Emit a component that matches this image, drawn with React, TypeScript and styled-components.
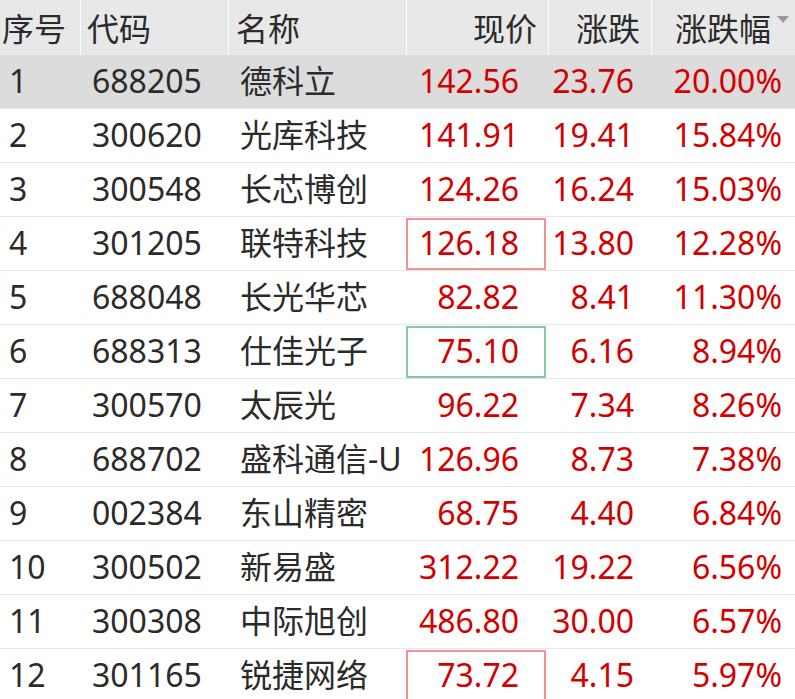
import styled, { createGlobalStyle } from "styled-components";

const GlobalStyle = createGlobalStyle`
	html, body {
		margin: 0;
		padding: 0;
		background: #ffffff;
		overflow: hidden;
	}
	body {
		font-family: "Noto Sans", "Noto Sans CJK SC", sans-serif;
	}
`;

type Mark = "up" | "down" | undefined;

interface Stock {
	code: string;
	name: string;
	price: string;
	change: string;
	pct: string;
	mark?: Mark;
}

const stocks: Stock[] = [
	{ code: "688205", name: "德科立", price: "142.56", change: "23.76", pct: "20.00%" },
	{ code: "300620", name: "光库科技", price: "141.91", change: "19.41", pct: "15.84%" },
	{ code: "300548", name: "长芯博创", price: "124.26", change: "16.24", pct: "15.03%" },
	{ code: "301205", name: "联特科技", price: "126.18", change: "13.80", pct: "12.28%", mark: "up" },
	{ code: "688048", name: "长光华芯", price: "82.82", change: "8.41", pct: "11.30%" },
	{ code: "688313", name: "仕佳光子", price: "75.10", change: "6.16", pct: "8.94%", mark: "down" },
	{ code: "300570", name: "太辰光", price: "96.22", change: "7.34", pct: "8.26%" },
	{ code: "688702", name: "盛科通信-U", price: "126.96", change: "8.73", pct: "7.38%" },
	{ code: "002384", name: "东山精密", price: "68.75", change: "4.40", pct: "6.84%" },
	{ code: "300502", name: "新易盛", price: "312.22", change: "19.22", pct: "6.56%" },
	{ code: "300308", name: "中际旭创", price: "486.80", change: "30.00", pct: "6.57%" },
	{ code: "301165", name: "锐捷网络", price: "73.72", change: "4.15", pct: "5.97%", mark: "up" },
];

const columns = "80px 148px 178px 142px 103px 144px";

const Board = styled.div`
	width: 795px;
	height: 699px;
	overflow: hidden;
	font-size: 32px;
	color: #2b2b2b;
`;

const HeadRow = styled.div`
	display: grid;
	grid-template-columns: ${columns};
	height: 55px;
	background: #e8e8e8;
`;

const HeadCell = styled.div<{ $align?: "left" | "right"; $pad: number }>`
	display: flex;
	align-items: center;
	justify-content: ${(p) => (p.$align === "right" ? "flex-end" : "flex-start")};
	padding: ${(p) => (p.$align === "right" ? `0 ${p.$pad}px 0 0` : `0 0 0 ${p.$pad}px`)};
	border-left: 1px solid #ffffff;
	white-space: nowrap;
	line-height: 1;
	padding-top: 2px;
	box-sizing: border-box;

	&:first-child {
		border-left: none;
	}
`;

const SortArrow = styled.span`
	width: 0;
	height: 0;
	margin-left: 6px;
	margin-top: -18px;
	border-left: 6px solid transparent;
	border-right: 6px solid transparent;
	border-top: 7px solid #9a9a9a;
`;

const Row = styled.div<{ $active?: boolean }>`
	display: grid;
	grid-template-columns: ${columns};
	height: 54px;
	box-sizing: border-box;
	border-bottom: 1px solid #e6e6e6;
	background: ${(p) => (p.$active ? "#dcdcdc" : "#ffffff")};
`;

const Cell = styled.div<{ $align?: "left" | "right"; $pad: number; $red?: boolean }>`
	display: flex;
	align-items: center;
	justify-content: ${(p) => (p.$align === "right" ? "flex-end" : "flex-start")};
	padding: ${(p) => (p.$align === "right" ? `0 ${p.$pad}px 0 0` : `0 0 0 ${p.$pad}px`)};
	color: ${(p) => (p.$red ? "#d20000" : "#2b2b2b")};
	white-space: nowrap;
	overflow: hidden;
	line-height: 1;
	padding-bottom: 2px;
	box-sizing: border-box;
`;

const PriceCell = styled(Cell)<{ $mark?: Mark }>`
	margin: 1px 2px 0 0;
	padding-right: 27px;
	box-shadow: ${(p) =>
		p.$mark === "up"
			? "inset 0 0 0 2px #f09294"
			: p.$mark === "down"
			? "inset 0 0 0 2px #86cba0"
			: "none"};
`;

function App() {
	return (
		<Board>
			<GlobalStyle />
			<HeadRow>
				<HeadCell $pad={2}>序号</HeadCell>
				<HeadCell $pad={6}>代码</HeadCell>
				<HeadCell $pad={7}>名称</HeadCell>
				<HeadCell $align="right" $pad={11}>现价</HeadCell>
				<HeadCell $align="right" $pad={11}>涨跌</HeadCell>
				<HeadCell $align="right" $pad={6}>
					涨跌幅
					<SortArrow />
				</HeadCell>
			</HeadRow>
			{stocks.map((s, i) => (
				<Row key={s.code} $active={i === 0}>
					<Cell $pad={9}>{i + 1}</Cell>
					<Cell $pad={12}>{s.code}</Cell>
					<Cell $pad={12}>{s.name}</Cell>
					<PriceCell $align="right" $pad={27} $red $mark={s.mark}>
						{s.price}
					</PriceCell>
					<Cell $align="right" $pad={17} $red>
						{s.change}
					</Cell>
					<Cell $align="right" $pad={13} $red>
						{s.pct}
					</Cell>
				</Row>
			))}
		</Board>
	);
}

export default App;
